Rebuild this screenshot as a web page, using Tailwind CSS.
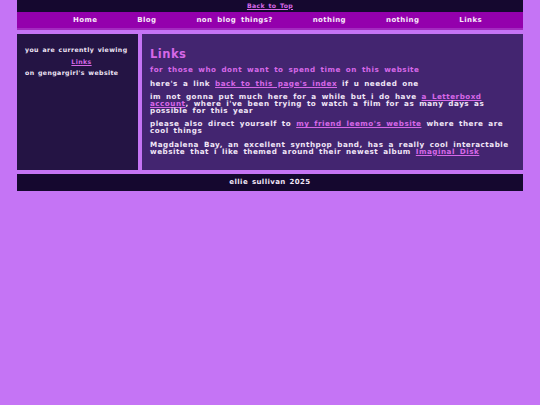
<!DOCTYPE html>
<html lang="en">
<head>
  <meta charset="UTF-8" />
  <meta name="viewport" content="width=device-width, initial-scale=1" />
  <title>Links</title>
  <script src="https://cdn.jsdelivr.net/npm/@tailwindcss/browser@4"></script>
</head>
<body class="bg-[#c574f5] min-h-screen font-['DejaVu_Sans'] font-bold text-[7.2px] leading-[6.8px] tracking-[0.5px] [word-spacing:2px] text-[#f1e6f7]">
  <div class="w-[506px] ml-[17px]">
    <div class="h-[12px] bg-[#15082f] flex items-center justify-center text-[6.2px] tracking-[0.35px] [word-spacing:1px]">
      <a href="#" class="text-[#d768e8] underline">Back to Top</a>
    </div>
    <nav class="h-[18px] bg-[#9400ad] border-b-[2px] border-[#a32bc0] flex items-center text-[7px] tracking-[0.4px] text-[#f8e9fa]">
      <a href="#" class="ml-[56px]">Home</a>
      <a href="#" class="ml-[40px]">Blog</a>
      <a href="#" class="ml-[40px]">non blog things?</a>
      <a href="#" class="ml-[40px]">nothing</a>
      <a href="#" class="ml-[40px]">nothing</a>
      <a href="#" class="ml-[40px]">Links</a>
    </nav>
    <div class="flex gap-[4px] mt-[4px]">
      <aside class="w-[121px] h-[136px] bg-[#241444] pt-[13px] pl-[8px] text-[6.2px] leading-[6px] tracking-[0.4px] [word-spacing:1px]">
        <p class="whitespace-nowrap">you are currently viewing</p>
        <p class="text-center mt-[5.5px]"><a href="#" class="text-[#d768e8] underline">Links</a></p>
        <p class="mt-[5.5px]">on gengargirl's website</p>
      </aside>
      <main class="flex-1 h-[136px] bg-[#432570] pt-[13px] px-[8px]">
        <h1 class="text-[11.5px] leading-[14px] text-[#d768e8]">Links</h1>
        <p class="mt-[6px] text-[#d768e8]">for those who dont want to spend time on this website</p>
        <p class="mt-[6.8px]">here's a link <a href="#" class="text-[#d768e8] underline">back to this page's index</a> if u needed one</p>
        <p class="mt-[6.8px]">im not gonna put much here for a while but i do have <a href="#" class="text-[#d768e8] underline">a Letterboxd account</a>, where i've been trying to watch a film for as many days as possible for this year</p>
        <p class="mt-[6.8px]">please also direct yourself to <a href="#" class="text-[#d768e8] underline">my friend leemo's website</a> where there are cool things</p>
        <p class="mt-[6.8px]">Magdalena Bay, an excellent synthpop band, has a really cool interactable website that i like themed around their newest album <a href="#" class="text-[#d768e8] underline">Imaginal Disk</a></p>
      </main>
    </div>
    <footer class="h-[17px] mt-[4px] bg-[#15082f] flex items-center justify-center text-[7px] tracking-[0.4px] [word-spacing:1px]">ellie sullivan 2025</footer>
  </div>
</body>
</html>
